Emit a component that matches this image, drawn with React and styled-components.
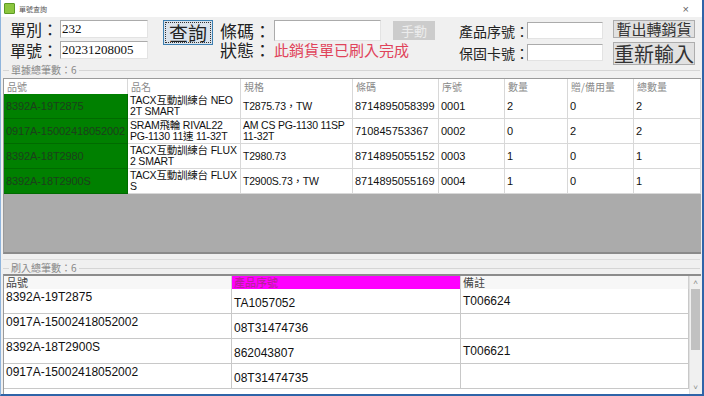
import React from "react";
import styled, { createGlobalStyle } from "styled-components";

const ORDER_ROWS = [
  { no: "8392A-19T2875", name: "TACX互動訓練台 NEO\n2T SMART", spec: "T2875.73，TW", code: "8714895058399", seq: "0001", qty: "2", gift: "0", total: "2" },
  { no: "0917A-15002418052002", name: "SRAM飛輪 RIVAL22\nPG-1130 11速 11-32T", spec: "AM CS PG-1130 11SP\n11-32T", code: "710845753367", seq: "0002", qty: "0", gift: "2", total: "2" },
  { no: "8392A-18T2980", name: "TACX互動訓練台 FLUX\n2 SMART", spec: "T2980.73", code: "8714895055152", seq: "0003", qty: "1", gift: "0", total: "1" },
  { no: "8392A-18T2900S", name: "TACX互動訓練台 FLUX\nS", spec: "T2900S.73，TW", code: "8714895055169", seq: "0004", qty: "1", gift: "0", total: "1" },
];

const SCAN_ROWS = [
  { no: "8392A-19T2875", serial: "TA1057052", note: "T006624" },
  { no: "0917A-15002418052002", serial: "08T31474736", note: "" },
  { no: "8392A-18T2900S", serial: "862043807", note: "T006621" },
  { no: "0917A-15002418052002", serial: "08T31474735", note: "" },
];

const COLS1 = "124px 113px 112px 86px 66px 63px 66px 1fr";
const COLS2 = "228px 229px 1fr";

const App = () => {
  return (
    <>
      <GlobalStyle />
      <Window>
        <TitleBar>
          <AppIcon />
          <Title>單號查詢</Title>
          <Close>×</Close>
        </TitleBar>
        <Header>
          <FieldGroup>
            <Row>
              <Label $w={50} $size={16}>單別：</Label>
              <Input $w={88} $h={18}>232</Input>
            </Row>
            <Row>
              <Label $w={50} $size={16}>單號：</Label>
              <Input $w={88} $h={18}>20231208005</Input>
            </Row>
          </FieldGroup>
          <QueryButton>
            <Focus>查詢</Focus>
          </QueryButton>
          <FieldGroup $ml={7} $gap={0}>
            <Row>
              <Label $w={54} $size={17}>條碼：</Label>
              <Input $w={107} $h={21} />
              <DisabledButton>手動</DisabledButton>
            </Row>
            <Row>
              <Label $w={54} $size={17}>狀態：</Label>
              <Status>此銷貨單已刷入完成</Status>
            </Row>
          </FieldGroup>
          <FieldGroup $ml={24} $gap={5} $pt={5}>
            <Row>
              <Label $w={68} $size={14}>產品序號：</Label>
              <Input $w={76} $h={17} />
            </Row>
            <Row>
              <Label $w={68} $size={14}>保固卡號：</Label>
              <Input $w={76} $h={17} />
            </Row>
          </FieldGroup>
          <FieldGroup $ml={10} $gap={4}>
            <ActionButton $h={18} $size={15}>暫出轉銷貨</ActionButton>
            <ActionButton $h={23} $size={20}>重新輸入</ActionButton>
          </FieldGroup>
        </Header>

        <GroupLegend>
          <span>單據總筆數：6</span>
        </GroupLegend>
        <OrderGrid>
          <HeadRow $cols={COLS1}>
            {["品號", "品名", "規格", "條碼", "序號", "數量", "贈/備用量", "總數量"].map((h) => (
              <HeadCell key={h}>{h}</HeadCell>
            ))}
          </HeadRow>
          {ORDER_ROWS.map((r, i) => (
            <DataRow $cols={COLS1} key={i}>
              <KeyCell>{r.no}</KeyCell>
              <Cell $tight>{r.name}</Cell>
              <Cell $tight>{r.spec}</Cell>
              <Cell>{r.code}</Cell>
              <Cell>{r.seq}</Cell>
              <Cell>{r.qty}</Cell>
              <Cell>{r.gift}</Cell>
              <Cell>{r.total}</Cell>
            </DataRow>
          ))}
          <EmptyArea />
        </OrderGrid>

        <Divider />
        <GroupLegend $top={1}>
          <span>刷入總筆數：6</span>
        </GroupLegend>
        <ScanGrid>
          <ScanBody>
            <HeadRow $cols={COLS2} $h={13}>
              <ScanHead>品號</ScanHead>
              <ScanHead $pink>產品序號</ScanHead>
              <ScanHead>備註</ScanHead>
            </HeadRow>
            {SCAN_ROWS.map((r, i) => (
              <DataRow $cols={COLS2} key={i}>
                <ScanCell $top>{r.no}</ScanCell>
                <ScanCell>{r.serial}</ScanCell>
                <ScanCell $note>{r.note}</ScanCell>
              </DataRow>
            ))}
          </ScanBody>
          <ScrollBar>
            <Arrow>˄</Arrow>
            <Thumb />
            <Track />
            <Arrow>˅</Arrow>
          </ScrollBar>
        </ScanGrid>
      </Window>
    </>
  );
};

export default App;

const GlobalStyle = createGlobalStyle`
  html, body {
    margin: 0;
    padding: 0;
    width: 704px;
    height: 396px;
    overflow: hidden;
    background: #f0f0f0;
  }
`;

const Window = styled.div`
  box-sizing: border-box;
  width: 704px;
  height: 396px;
  background: #f0f0f0;
  border-left: 1px solid #8fb4dc;
  border-right: 2px solid #2f64a8;
  border-bottom: 2px solid #2f64a8;
  display: flex;
  flex-direction: column;
  font-family: "Noto Sans CJK TC", "Liberation Sans", sans-serif;
`;

const TitleBar = styled.div`
  height: 17px;
  background: #fff;
  display: flex;
  align-items: center;
  padding-left: 3px;
`;

const AppIcon = styled.div`
  width: 9px;
  height: 9px;
  background: #8cc63f;
  border: 1px solid #5c9a24;
  border-radius: 1px;
`;

const Title = styled.div`
  font-size: 7px;
  color: #555;
  margin-left: 4px;
  flex: 1;
`;

const Close = styled.div`
  font-size: 11px;
  color: #666;
  margin-right: 13px;
  font-family: "Liberation Sans", sans-serif;
`;

const Header = styled.div`
  height: 46px;
  display: flex;
  align-items: flex-start;
  padding-left: 9px;
`;

const FieldGroup = styled.div`
  display: flex;
  flex-direction: column;
  gap: ${(p) => p.$gap ?? 3}px;
  padding-top: ${(p) => p.$pt ?? 3}px;
  margin-left: ${(p) => p.$ml ?? 0}px;
`;

const Row = styled.div`
  display: flex;
  align-items: center;
`;

const Label = styled.div`
  width: ${(p) => p.$w}px;
  font-size: ${(p) => p.$size}px;
  line-height: 1;
  color: #222;
  white-space: nowrap;
`;

const Input = styled.div`
  box-sizing: border-box;
  width: ${(p) => p.$w}px;
  height: ${(p) => p.$h}px;
  background: #fff;
  border: 1px solid #a9a9a9;
  border-color: #ababab #e3e3e3 #e3e3e3 #ababab;
  font-family: "Liberation Serif", serif;
  font-size: 13px;
  line-height: 15px;
  padding-left: 1px;
  color: #111;
`;

const QueryButton = styled.div`
  box-sizing: border-box;
  width: 50px;
  height: 25px;
  margin: 3px 0 0 15px;
  border: 1px solid #3c7fb1;
  background: #dbe3ec;
  padding: 1px;
`;

const Focus = styled.div`
  box-sizing: border-box;
  height: 100%;
  border: 1px dotted #333;
  font-size: 19px;
  line-height: 20px;
  text-align: center;
  color: #222;
`;

const DisabledButton = styled.div`
  width: 42px;
  height: 19px;
  margin-left: 12px;
  background: #cccccc;
  color: #ececec;
  font-size: 13px;
  line-height: 19px;
  text-align: center;
`;

const Status = styled.div`
  font-size: 15px;
  line-height: 1;
  color: #e0435a;
`;

const ActionButton = styled.div`
  box-sizing: border-box;
  width: 82px;
  height: ${(p) => p.$h}px;
  background: #e1e1e1;
  border: 1px solid #adadad;
  font-size: ${(p) => p.$size}px;
  line-height: ${(p) => p.$h - 2}px;
  text-align: center;
  color: #333;
`;

const GroupLegend = styled.div`
  height: 13px;
  margin-top: ${(p) => p.$top ?? 0}px;
  position: relative;
  display: flex;
  align-items: center;
  padding-left: 8px;
  &::before {
    content: "";
    position: absolute;
    left: 2px;
    right: 2px;
    top: 7px;
    border-top: 1px solid #d5d5d5;
  }
  span {
    position: relative;
    background: #f0f0f0;
    padding: 0 2px;
    font-size: 10px;
    color: #888;
    line-height: 13px;
  }
`;

const OrderGrid = styled.div`
  margin: 2px 1px 0 2px;
  height: 173px;
  border-style: solid;
  border-width: 1px 0 2px 1px;
  border-color: #9a9a9a #8a8a8a #8a8a8a #9a9a9a;
  display: flex;
  flex-direction: column;
  background: #ababab;
  font-family: "Liberation Sans", "Noto Sans CJK TC", sans-serif;
`;

const HeadRow = styled.div`
  display: grid;
  grid-template-columns: ${(p) => p.$cols};
  height: ${(p) => p.$h ?? 15}px;
  background: #fff;
`;

const HeadCell = styled.div`
  font-size: 10px;
  color: #8a8a8a;
  line-height: 15px;
  padding-left: 3px;
  border-right: 1px solid #d8d8d8;
  border-bottom: 1px solid #d8d8d8;
  font-family: "Noto Sans CJK TC", sans-serif;
`;

const DataRow = styled.div`
  display: grid;
  grid-template-columns: ${(p) => p.$cols};
  height: 25px;
  background: #fff;
`;

const Cell = styled.div`
  box-sizing: border-box;
  font-size: ${(p) => (p.$tight ? 10.5 : 11)}px;
  letter-spacing: ${(p) => (p.$tight ? -0.2 : 0)}px;
  line-height: 11px;
  color: #111;
  padding-left: 2px;
  display: flex;
  align-items: center;
  white-space: pre;
  border-right: 1px solid #d8d8d8;
  border-bottom: 1px solid #d8d8d8;
  overflow: hidden;
`;

const KeyCell = styled(Cell)`
  background: #008000;
  color: #1c3f1c;
  border-color: #006a00;
  letter-spacing: -0.1px;
`;

const EmptyArea = styled.div`
  flex: 1;
  background: #ababab;
`;

const Divider = styled.div`
  margin: 5px 2px 0 2px;
  border-top: 1px solid #dcdcdc;
`;

const ScanGrid = styled.div`
  margin: 0 1px 0 2px;
  flex: 1;
  display: flex;
  border-top: 2px solid #8c8c8c;
  border-left: 1px solid #9a9a9a;
  background: #fff;
  font-family: "Liberation Sans", "Noto Sans CJK TC", sans-serif;
`;

const ScanBody = styled.div`
  flex: 1;
`;

const ScanHead = styled.div`
  font-size: 11px;
  line-height: 13px;
  padding-left: 2px;
  background: ${(p) => (p.$pink ? "#ff00ff" : "#f7f7f7")};
  color: ${(p) => (p.$pink ? "#b0258f" : "#444")};
  border-right: 1px solid #d0d0d0;
  font-family: "Noto Sans CJK TC", sans-serif;
`;

const ScanCell = styled.div`
  box-sizing: border-box;
  font-size: 12px;
  color: #111;
  padding-left: 2px;
  padding-top: ${(p) => (p.$top ? 1 : p.$note ? 5 : 7)}px;
  border-right: 1px solid #c8c8c8;
  border-bottom: 1px solid #c8c8c8;
`;

const ScrollBar = styled.div`
  width: 11px;
  display: flex;
  flex-direction: column;
  background: #f0f0f0;
  border-left: 1px solid #e0e0e0;
`;

const Arrow = styled.div`
  height: 13px;
  font-size: 8px;
  line-height: 13px;
  text-align: center;
  color: #888;
`;

const Thumb = styled.div`
  height: 61px;
  margin: 0 1px;
  background: #c1c1c1;
`;

const Track = styled.div`
  flex: 1;
`;
